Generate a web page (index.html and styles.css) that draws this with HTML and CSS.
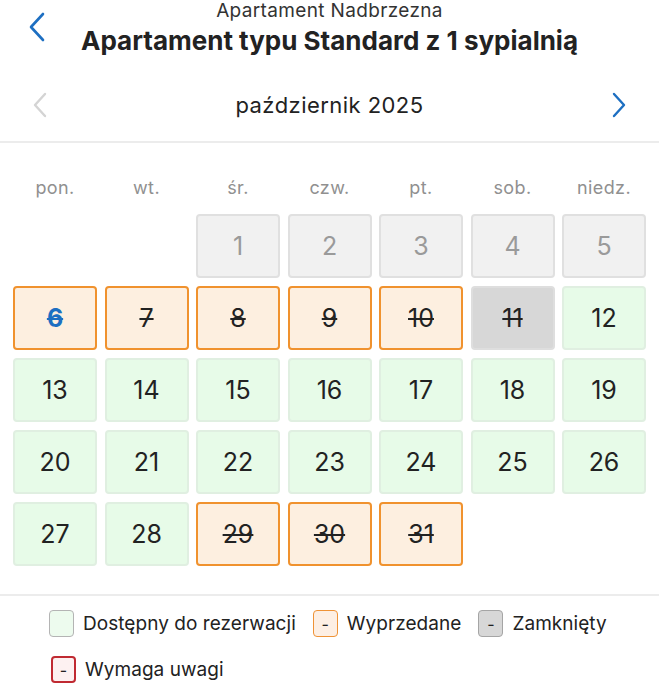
FILE: index.html
```html
<!DOCTYPE html>
<html lang="pl">
<head>
<meta charset="utf-8">
<title>Kalendarz</title>
<link rel="stylesheet" href="styles.css">
</head>
<body>
<header class="top">
  <div class="top-left">
    <svg class="back" width="20" height="30" viewBox="0 0 20 30"><path d="M16 2 L4 15 L16 28" fill="none" stroke="#1d6fc2" stroke-width="2.6" stroke-linecap="round" stroke-linejoin="round"/></svg>
  </div>
  <div class="titles">
    <div class="subtitle">Apartament Nadbrzezna</div>
    <h1 class="title">Apartament typu Standard z 1 sypialnią</h1>
  </div>
  <div></div>
</header>
<nav class="month">
  <svg width="16" height="26" viewBox="0 0 16 26"><path d="M13 2 L3 13 L13 24" fill="none" stroke="#d4d4d4" stroke-width="2.4" stroke-linecap="round" stroke-linejoin="round"/></svg>
  <div class="month-name">październik 2025</div>
  <svg width="16" height="26" viewBox="0 0 16 26"><path d="M3 2 L13 13 L3 24" fill="none" stroke="#1d6fc2" stroke-width="2.4" stroke-linecap="round" stroke-linejoin="round"/></svg>
</nav>
<section class="calendar">
  <div class="weekdays">
    <span>pon.</span><span>wt.</span><span>śr.</span><span>czw.</span><span>pt.</span><span>sob.</span><span>niedz.</span>
  </div>
  <div class="grid">
    <div class="cell empty"></div>
    <div class="cell empty"></div>
    <div class="cell past">1</div>
    <div class="cell past">2</div>
    <div class="cell past">3</div>
    <div class="cell past">4</div>
    <div class="cell past">5</div>
    <div class="cell sold today"><s>6</s></div>
    <div class="cell sold"><s>7</s></div>
    <div class="cell sold"><s>8</s></div>
    <div class="cell sold"><s>9</s></div>
    <div class="cell sold"><s>10</s></div>
    <div class="cell closed"><s>11</s></div>
    <div class="cell free">12</div>
    <div class="cell free">13</div>
    <div class="cell free">14</div>
    <div class="cell free">15</div>
    <div class="cell free">16</div>
    <div class="cell free">17</div>
    <div class="cell free">18</div>
    <div class="cell free">19</div>
    <div class="cell free">20</div>
    <div class="cell free">21</div>
    <div class="cell free">22</div>
    <div class="cell free">23</div>
    <div class="cell free">24</div>
    <div class="cell free">25</div>
    <div class="cell free">26</div>
    <div class="cell free">27</div>
    <div class="cell free">28</div>
    <div class="cell sold"><s>29</s></div>
    <div class="cell sold"><s>30</s></div>
    <div class="cell sold"><s>31</s></div>
  </div>
</section>
<footer class="legend">
  <div class="item"><span class="box box-free"></span>Dostępny do rezerwacji</div>
  <div class="item"><span class="box box-sold">-</span>Wyprzedane</div>
  <div class="item"><span class="box box-closed">-</span>Zamknięty</div>
  <div class="item"><span class="box box-alert">-</span>Wymaga uwagi</div>
</footer>
</body>
</html>
```

FILE: styles.css
```css
* { box-sizing: border-box; }
html, body { margin: 0; padding: 0; background: #fff; }
body {
  font-family: Inter, "Noto Sans", "Liberation Sans", sans-serif;
  color: #222;
  width: 659px;
}
.top {
  display: grid;
  grid-template-columns: 1fr auto 1fr;
  align-items: start;
  height: 68px;
}
.top-left { padding: 12px 0 0 27px; }
.back { display: block; }
.titles { text-align: center; }
.subtitle {
  font-size: 19px;
  line-height: 22px;
  color: #333;
  letter-spacing: 0.35px;
}
.title {
  margin: 0;
  font-size: 26px;
  line-height: 30px;
  font-weight: 700;
  color: #222;
  letter-spacing: 0;
  padding-top: 4px;
}
.month {
  display: flex;
  align-items: center;
  justify-content: space-between;
  height: 75px;
  padding: 0 32px;
  border-bottom: 2px solid #ececec;
}
.month svg { display: block; }
.month-name {
  font-size: 22px;
  color: #222;
  letter-spacing: 0.45px;
}
.calendar {
  padding: 33px 13px 28px;
  border-bottom: 2px solid #ececec;
}
.weekdays {
  display: grid;
  grid-template-columns: repeat(7, 1fr);
  column-gap: 7.5px;
  height: 24px;
  line-height: 24px;
  margin-bottom: 14px;
  text-align: center;
  font-size: 18px;
  letter-spacing: 0.4px;
  color: #909090;
}
.grid {
  display: grid;
  grid-template-columns: repeat(7, 1fr);
  grid-auto-rows: 64px;
  column-gap: 7.5px;
  row-gap: 8px;
}
.cell {
  display: flex;
  align-items: center;
  justify-content: center;
  border-radius: 4px;
  font-size: 25px;
  color: #222;
}
.cell s { text-decoration-thickness: 2px; }
.empty { background: transparent; }
.past {
  background: #f1f1f1;
  border: 2px solid #e0e0e0;
  color: #9a9a9a;
}
.sold {
  background: #fdefe0;
  border: 2px solid #f0922e;
}
.today { color: #1d6fc2; font-weight: 700; }
.closed {
  background: #d7d7d7;
  border: 2px solid #dedede;
}
.free {
  background: #e7fbe8;
  border: 2px solid #e0efe1;
}
.legend {
  display: flex;
  flex-wrap: wrap;
  padding: 14px 30px 0 49px;
  column-gap: 17px;
  row-gap: 19px;
}
.item {
  display: flex;
  align-items: center;
  gap: 9px;
  font-size: 19px;
  letter-spacing: 0.05px;
  color: #222;
  height: 27px;
}
.box {
  width: 25px;
  height: 27px;
  border-radius: 4px;
  border: 1.5px solid #ababab;
  display: flex;
  align-items: center;
  justify-content: center;
  font-size: 16px;
  line-height: 1;
  color: #222;
}
.box-free { background: #edfbee; border-color: #b4b4b4; }
.box-sold { background: #fdefe4; border-color: #ef9336; }
.box-closed { background: #d7d7d7; border-color: #a5a5a5; }
.box-alert { background: #fdf1f1; border-color: #c02a32; border-width: 2px; margin-left: 2px; }
```
